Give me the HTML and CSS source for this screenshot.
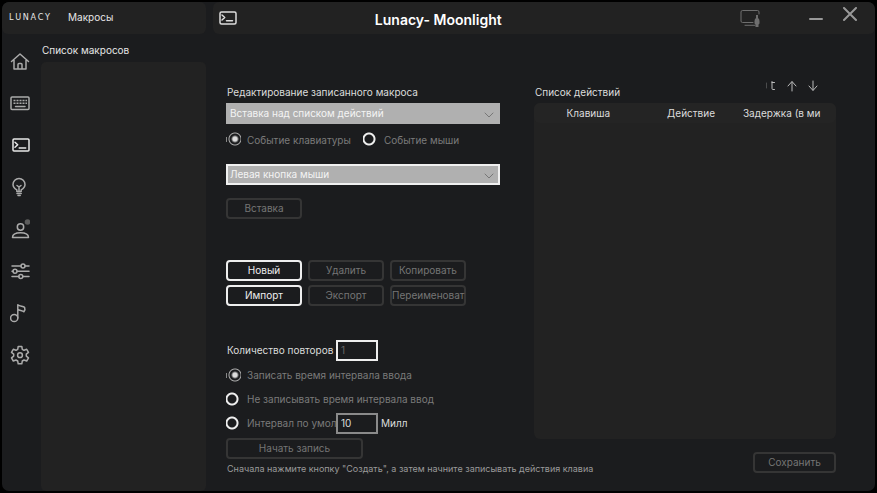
FILE: index.html
```html
<!DOCTYPE html>
<html lang="ru">
<head>
  <meta charset="UTF-8">
  <meta name="viewport" content="width=device-width, initial-scale=1">
  <title>Lunacy - Moonlight</title>
  <link rel="stylesheet" href="styles.css">
</head>
<body>
  <div class="window">
    <!-- Левая часть: логотип, меню, список макросов -->
    <div class="left">
      <header class="bar brand">
        <div class="logo"><span>L</span><span>U</span><span>N</span><span>A</span><span>C</span><span>Y</span></div>
        <span class="section">Макросы</span>
      </header>

      <div class="left-body">
        <nav class="menu">
          <a href="#home" aria-label="Главная">
            <svg viewBox="0 0 20 20"><path d="M1.500 10.500 10 3l8.500 7.500M4 9v9h12V9M8 18v-4.500q0-1 1-1h2q1 0 1 1V18"/></svg>
          </a>
          <a href="#keyboard" aria-label="Клавиатура">
            <svg viewBox="0 0 20 20"><rect x="1" y="4" width="18" height="12.500" rx="1"/><path class="keys" d="M3.500 7.500h13.500M3.500 10.300h13.500"/><path d="M5.500 13.500h9.500"/></svg>
          </a>
          <a href="#macros" class="active" aria-label="Макросы">
            <svg viewBox="0 0 20 20"><rect x="3" y="4" width="16" height="12" rx="1"/><path d="m5 7.300 2.700 2.500L5 12.300M9.200 13h6.500"/></svg>
          </a>
          <a href="#light" aria-label="Подсветка">
            <svg viewBox="0 0 20 20"><path d="M6.800 14.500v-1.700C4.500 11.500 3 10 3 7.500a6 6 0 0 1 12 0c0 2.500-1.500 4-3.800 5.300v1.700zM7 16.500h4.200M8 18.500h2.200M7 8.500l2 1.500 2-1.500M9 10v4"/></svg>
          </a>
          <a href="#profile" aria-label="Профиль">
            <svg viewBox="0 0 20 20"><circle cx="10.500" cy="8" r="3.200"/><path d="M2.500 18.500c0-3.200 3-4.800 8-4.800s8 1.600 8 4.800z"/><circle class="dot" cx="17.500" cy="3" r="2.800"/></svg>
          </a>
          <a href="#settings" aria-label="Параметры">
            <svg viewBox="0 0 20 20"><path d="M2 5h9M15 5h4M2 10.200h1M7 10.200h12M2 15.500h7M13 15.500h6"/><circle cx="13" cy="5" r="2"/><circle cx="5" cy="10.200" r="2"/><circle cx="10.800" cy="15.500" r="2"/></svg>
          </a>
          <a href="#music" aria-label="Музыка">
            <svg viewBox="0 0 20 20"><circle cx="4.200" cy="15" r="3.600"/><path d="M7.800 15V1.800c2 1.800 5 1.200 6.800 2.500.7 1.700.3 3.200-.7 4.500-1.500-1.600-4-1-6.100-2.300"/></svg>
          </a>
          <a href="#options" aria-label="Настройки">
            <svg viewBox="0 0 20 20"><path d="m7.700 4.300.5-2.800h3.600l.5 2.800 1.700 1 2.700-1 1.800 3.100-2.200 1.800v1.900l2.200 1.800-1.800 3.100-2.700-1-1.700 1-.5 2.800H8.200l-.5-2.800-1.700-1-2.700 1-1.800-3.100 2.200-1.800V9.200L1.500 7.400l1.800-3.100 2.700 1z"/><circle cx="10" cy="10.200" r="2.400"/></svg>
          </a>
        </nav>

        <section class="macros">
          <h2>Список макросов</h2>
          <div class="macro-list"></div>
        </section>
      </div>
    </div>

    <!-- Правая часть: заголовок и редактор -->
    <div class="right">
      <header class="bar titlebar">
        <svg class="title-icon" viewBox="0 0 18 14"><rect x="1" y="1" width="16" height="12" rx="1.500"/><path d="m3 4 2.700 2.500L3 9M7.500 9.700h6"/></svg>
        <h1>Lunacy- Moonlight</h1>
        <div class="window-buttons">
          <svg class="device" viewBox="0 0 20 18"><path d="M13 13.500H2.500q-1.500 0-1.500-1.500V3q0-1.500 1.500-1.500h15Q19 1.500 19 3v2M5 16.300h10"/><path class="fill" d="M16 6h2v3q1.500 1 1.500 3v2q0 1-1 1.500V18h-3v-2.500q-1-.5-1-1.500v-2q0-2 1.500-3z"/></svg>
          <button type="button" aria-label="Свернуть"><svg viewBox="0 0 16 16"><path d="M2 12h12"/></svg></button>
          <button type="button" aria-label="Закрыть"><svg viewBox="0 0 16 16"><path d="m2 1 12 12M14 1 2 13"/></svg></button>
        </div>
      </header>

      <main class="editor">
        <form class="form">
          <label class="caption" for="place">Редактирование записанного макроса</label>
          <div class="select">
            <select id="place"><option>Вставка над списком действий</option></select>
            <svg viewBox="0 0 10 6"><path d="m1 1 4 4 4-4"/></svg>
          </div>
          <div class="events">
            <label class="radio"><input type="radio" name="event" checked>Событие клавиатуры</label>
            <label class="radio"><input type="radio" name="event">Событие мыши</label>
          </div>
          <div class="select outlined">
            <select aria-label="Кнопка мыши"><option>Левая кнопка мыши</option></select>
            <svg viewBox="0 0 10 6"><path d="m1 1 4 4 4-4"/></svg>
          </div>
          <button type="button" class="btn insert" disabled>Вставка</button>

          <div class="commands">
            <button type="button" class="btn">Новый</button>
            <button type="button" class="btn" disabled>Удалить</button>
            <button type="button" class="btn" disabled>Копировать</button>
            <button type="button" class="btn">Импорт</button>
            <button type="button" class="btn" disabled>Экспорт</button>
            <button type="button" class="btn" disabled>Переименоват</button>
          </div>

          <div class="row repeat">
            <label for="repeat">Количество повторов</label>
            <input id="repeat" class="number" type="text" value="1" disabled>
          </div>
          <div class="row"><label class="radio"><input type="radio" name="delay" checked>Записать время интервала ввода</label></div>
          <div class="row"><label class="radio"><input type="radio" name="delay">Не записывать время интервала ввод</label></div>
          <div class="row interval">
            <label class="radio"><input type="radio" name="delay">Интервал по умол</label>
            <input id="ms" class="number" type="text" value="10">
            <label for="ms">Милл</label>
          </div>
          <button type="button" class="btn record" disabled>Начать запись</button>
          <p class="hint">Сначала нажмите кнопку "Создать", а затем начните записывать действия клавиа</p>
        </form>

        <section class="actions">
          <div class="actions-head">
            <h2>Список действий</h2>
            <div class="tools">
              <button type="button" aria-label="Удалить действие"><svg viewBox="0 0 12 12"><path class="faint" d="M1.500 3v5"/><path d="M9.500 2.500H7M7 1.500v7q0 1 1 1h1.500"/></svg></button>
              <button type="button" aria-label="Вверх"><svg viewBox="0 0 12 12"><path d="M6 11V2M2 6l4-4.500L10 6"/></svg></button>
              <button type="button" aria-label="Вниз"><svg viewBox="0 0 12 12"><path d="M6 1v9M2 6l4 4.500L10 6"/></svg></button>
            </div>
          </div>
          <div class="action-list">
            <table>
              <thead>
                <tr><th>Клавиша</th><th>Действие</th><th>Задержка (в ми</th></tr>
              </thead>
            </table>
          </div>
          <button type="button" class="btn save" disabled>Сохранить</button>
        </section>
      </main>
    </div>
  </div>
</body>
</html>
```
FILE: styles.css
```css
* {
  box-sizing: border-box;
}

body {
  margin: 0;
  padding: 2px;
  min-height: 100vh;
  display: flex;
  background: #000;
  color: #e6e6e6;
  font-family: Inter, sans-serif;
  font-size: 10px;
  line-height: 12px;
}

h1, h2, p {
  margin: 0;
  font-size: inherit;
  font-weight: 400;
}

button, input, select {
  font: inherit;
  color: inherit;
}

svg {
  display: block;
  fill: none;
  stroke: currentColor;
  stroke-linecap: round;
  stroke-linejoin: round;
}

.window {
  flex: 1;
  display: flex;
  gap: 7px;
  background: #1b1c1e;
  border-radius: 7px;
  overflow: hidden;
}

.bar {
  height: 32px;
  display: flex;
  align-items: center;
  background: #222;
  border-radius: 6px;
}

/* left side */

.left {
  width: 204px;
  display: flex;
  flex-direction: column;
}

.brand {
  gap: 18px;
  padding: 0 7px 3px;
}

.logo {
  width: 41px;
  display: flex;
  justify-content: space-between;
  font-family: "Liberation Sans Narrow", "DejaVu Sans Condensed", sans-serif;
  font-size: 9px;
}

.left-body {
  flex: 1;
  display: flex;
}

.menu {
  width: 39px;
  padding-top: 17px;
  display: flex;
  flex-direction: column;
  gap: 22px;
}

.menu a {
  width: 20px;
  height: 20px;
  margin-left: 8px;
  color: #aaa;
}

.menu svg {
  width: 20px;
  height: 20px;
  stroke-width: 1.5;
}

.menu .active {
  color: #e8e8e8;
}

.menu .keys {
  stroke-linecap: butt;
  stroke-dasharray: 2 1;
}

.menu .dot {
  fill: #5c5c5c;
  stroke: none;
}

.macros {
  flex: 1;
  display: flex;
  flex-direction: column;
  gap: 6px;
  padding-top: 10px;
}

.macros h2, .actions h2 {
  padding-left: 1px;
}

.macro-list {
  flex: 1;
  background: #222;
  border-radius: 5px;
}

/* title bar */

.right {
  flex: 1;
  display: flex;
  flex-direction: column;
}

.titlebar {
  display: grid;
  grid-template-columns: 7fr auto 16fr;
  padding: 0 17px 0 6px;
}

.title-icon {
  width: 18px;
  height: 14px;
  color: #ddd;
  stroke-width: 1.5;
}

.titlebar h1 {
  color: #fff;
  font-size: 14px;
  line-height: 18px;
  font-weight: 600;
  padding-top: 4px;
}

.window-buttons {
  display: flex;
  justify-content: flex-end;
  align-items: center;
  color: #999;
}

.window-buttons button {
  width: 16px;
  padding: 0;
  margin-bottom: 7px;
  border: 0;
  background: none;
}

.window-buttons button + button {
  margin-left: 18px;
}

.window-buttons button svg {
  stroke-width: 2;
}

.device {
  width: 20px;
  height: 18px;
  margin-right: 48px;
  color: #6e6e6e;
}

.device .fill {
  fill: currentColor;
  stroke: none;
}

/* editor */

.editor {
  flex: 1;
  display: flex;
  gap: 34px;
  padding: 52px 39px 0 13px;
}

.form {
  width: 274px;
  flex-shrink: 0;
  color: #dcdcdc;
}

.caption {
  display: block;
  padding-left: 1px;
  margin-bottom: 5px;
}

.select {
  position: relative;
}

.select select {
  display: block;
  appearance: none;
  width: 100%;
  height: 21px;
  padding: 0 4px 2px;
  border: 0;
  border-radius: 0;
  background: #b0b0b0;
  color: #f4f4f4;
}

.select.outlined select {
  padding: 0 2px 2px;
  border: 2px solid #f0f0f0;
}

.select svg {
  position: absolute;
  right: 6px;
  top: 9px;
  width: 10px;
  height: 6px;
  color: #777;
}

.events {
  display: grid;
  grid-template-columns: 1fr 1fr;
  margin: 8px 0 17px;
}

.radio {
  display: flex;
  align-items: center;
  gap: 6px;
  color: #7a7a7a;
  white-space: nowrap;
}

.radio input {
  appearance: none;
  flex-shrink: 0;
  width: 15px;
  height: 15px;
  margin: 0;
  background: radial-gradient(circle at 6px 7px, transparent 4px, #eee 5px, #eee 6px, transparent 7px);
}

/* checked dot is shifted and cut at the right edge */
.radio input:checked {
  background:
    linear-gradient(#888, #888) 0 5px / 1px 5px no-repeat,
    radial-gradient(circle at 9px 7px, #ddd 2px, transparent 4px, transparent 5px, #aaa 6px, #aaa 6px, transparent 7px);
}

.btn {
  height: 21px;
  padding: 0 0 2px;
  border: 2px solid #eee;
  border-radius: 4px;
  background: none;
  color: #eee;
  text-align: center;
  white-space: nowrap;
}

.btn:disabled {
  border-color: #353535;
  color: #757575;
}

.insert {
  display: block;
  width: 76px;
  margin-top: 13px;
}

.commands {
  display: grid;
  grid-template-columns: repeat(3, 76px);
  gap: 4px 6px;
  margin: 41px 0 34px;
}

.row {
  display: flex;
  align-items: center;
  height: 24px;
}

.repeat {
  height: 20px;
  padding-left: 1px;
  margin-bottom: 3px;
}

.repeat label {
  width: 109px;
}

.number {
  width: 42px;
  height: 21px;
  padding: 0 3px;
  border: 2px solid #eee;
  border-radius: 0;
  background: #1b1c1e;
}

.number:disabled {
  color: #666;
}

.interval .radio {
  width: 110px;
}

.interval .number {
  border-color: #8a8a8a;
  margin-right: 3px;
}

.record {
  display: block;
  width: 137px;
  margin-top: 3px;
}

.hint {
  padding: 4px 0 0 1px;
  color: #9a9a9a;
  font-size: 9px;
  white-space: nowrap;
}

/* action list */

.actions {
  flex: 1;
  display: flex;
  flex-direction: column;
  color: #dcdcdc;
}

.actions-head {
  display: flex;
  justify-content: space-between;
  margin-bottom: 5px;
}

.tools {
  display: flex;
  gap: 9px;
  height: 12px;
  margin-top: -6px;
  padding-right: 17px;
  color: #bbb;
}

.tools button {
  width: 12px;
  height: 12px;
  padding: 0;
  border: 0;
  background: none;
}

.tools .faint {
  opacity: 0.3;
}

.action-list {
  height: 336px;
  background: #222;
  border-radius: 6px;
}

.action-list table {
  width: 100%;
  table-layout: fixed;
  border-collapse: collapse;
  background: #242424;
  border-radius: 6px;
}

.action-list th {
  height: 20px;
  padding: 0 0 1px;
  font-weight: 400;
}

.action-list th:first-child {
  width: 36%;
}

.action-list th:last-child {
  width: 32%;
  padding-right: 12px;
}

.save {
  width: 83px;
  align-self: flex-end;
  margin-top: 13px;
}
```
